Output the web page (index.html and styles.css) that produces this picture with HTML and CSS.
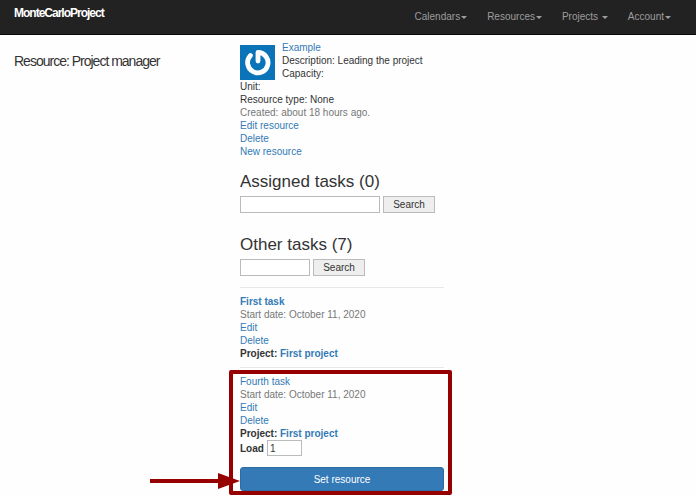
FILE: index.html
```html
<!DOCTYPE html>
<html lang="en">
<head>
<meta charset="utf-8">
<title>Resource | MonteCarloProject</title>
<link rel="stylesheet" href="styles.css">
</head>
<body>
<header class="navbar">
  <a class="logo" href="#">MonteCarloProject</a>
  <nav class="menu">
    <a href="#">Calendars<span class="caret"></span></a>
    <a href="#">Resources<span class="caret"></span></a>
    <a href="#">Projects <span class="caret"></span></a>
    <a href="#">Account<span class="caret"></span></a>
  </nav>
</header>
<main class="container">
  <aside>
    <h1>Resource: Project manager</h1>
  </aside>
  <div class="content">
    <section class="resource">
      <svg class="avatar" viewBox="0 0 35 35" aria-hidden="true">
        <rect width="35" height="35" fill="#0b73b8"/>
        <path d="M10.4 10.6A10.2 10.2 0 1 0 18 7.4V16" fill="none" stroke="#fff" stroke-width="4.8" stroke-linecap="round" stroke-linejoin="round"/>
      </svg>
      <div><a href="#">Example</a></div>
      <div>Description: Leading the project</div>
      <div>Capacity:</div>
      <div>Unit:</div>
      <div>Resource type: None</div>
      <div class="muted">Created: about 18 hours ago.</div>
      <div><a href="#">Edit resource</a></div>
      <div><a href="#">Delete</a></div>
      <div><a href="#">New resource</a></div>
    </section>
    <section class="tasks">
      <h2>Assigned tasks (0)</h2>
      <form class="search">
        <input class="wide" type="text" aria-label="Search assigned tasks">
        <button type="button">Search</button>
      </form>
    </section>
    <section class="tasks">
      <h2>Other tasks (7)</h2>
      <form class="search">
        <input class="short" type="text" aria-label="Search other tasks">
        <button type="button">Search</button>
      </form>
    </section>
    <ol class="list">
      <li>
        <div><a class="strong" href="#">First task</a></div>
        <div class="muted">Start date: October 11, 2020</div>
        <div><a href="#">Edit</a></div>
        <div><a href="#">Delete</a></div>
        <div class="strong">Project: <a href="#">First project</a></div>
      </li>
      <li>
        <div><a href="#">Fourth task</a></div>
        <div class="muted">Start date: October 11, 2020</div>
        <div><a href="#">Edit</a></div>
        <div><a href="#">Delete</a></div>
        <div class="strong">Project: <a href="#">First project</a></div>
        <form>
          <div class="load">
            <label class="strong" for="load">Load</label>
            <input id="load" type="text" value="1">
          </div>
          <button class="primary" type="button">Set resource</button>
        </form>
        <div class="highlight"></div>
        <svg class="arrow" viewBox="0 0 90 16" aria-hidden="true">
          <path d="M0 6H68V0L90 8L68 16V10H0Z" fill="#960000"/>
        </svg>
      </li>
    </ol>
  </div>
</main>
</body>
</html>
```
FILE: styles.css
```css
* {
  box-sizing: border-box;
}

body {
  margin: 0;
  background: #fefefe;
  color: #333;
  font: 10px/13px "Liberation Sans", Arial, sans-serif;
}

a {
  color: #337ab7;
  text-decoration: none;
}

.navbar {
  display: flex;
  justify-content: space-between;
  height: 35px;
  padding: 0 25px 0 14px;
  background: #222;
  border-bottom: 1px solid #080808;
}

.logo {
  padding-top: 7px;
  color: #fff;
  font-size: 12px;
  font-weight: bold;
  letter-spacing: -1px;
}

.menu {
  display: flex;
  gap: 20px;
  padding-top: 10px;
}

.menu a {
  color: #9d9d9d;
}

.caret {
  display: inline-block;
  margin-left: 1px;
  vertical-align: middle;
  border-top: 3px solid;
  border-left: 3px solid transparent;
  border-right: 3px solid transparent;
}

.container {
  display: grid;
  grid-template-columns: repeat(3, 1fr);
  gap: 22px;
  padding: 5px 26px 0 14px;
}

h1 {
  margin: 12px 0 0;
  font-size: 14px;
  font-weight: normal;
  line-height: 18px;
  letter-spacing: -1px;
  white-space: nowrap;
}

.avatar {
  float: left;
  width: 35px;
  height: 35px;
  margin: 4px 7px 0 0;
}

.muted {
  color: #777;
}

.strong {
  font-weight: bold;
}

.resource {
  padding-top: 1px;
  margin-bottom: 14px;
}

.tasks {
  margin-bottom: 22px;
}

h2 {
  margin: 0 0 5px;
  font-size: 17px;
  font-weight: normal;
  line-height: 19px;
}

.search {
  display: flex;
  gap: 3px;
}

.search input,
.load input {
  height: 17px;
  padding: 0 2px;
  border: 1px solid #bbb;
  background: #fff;
  color: #333;
  font: inherit;
}

.wide {
  width: 140px;
}

.short {
  width: 70px;
}

.search button {
  width: 52px;
  height: 17px;
  padding: 0;
  border: 1px solid #bbb;
  background: #eee;
  color: #333;
  font: inherit;
}

.list {
  margin: -11px 0 0;
  padding: 0;
  list-style: none;
}

.list li {
  position: relative;
  padding: 7px 0;
  border-top: 1px solid #e8e8e8;
}

.load {
  display: flex;
  align-items: center;
  gap: 3px;
}

.load input {
  width: 35px;
  height: 16px;
}

.primary {
  display: block;
  width: 100%;
  height: 24px;
  margin-top: 11px;
  padding: 0;
  border: 1px solid #2e6da4;
  border-radius: 3px;
  background: #337ab7;
  color: #fff;
  font: inherit;
}

.highlight {
  position: absolute;
  inset: 2px -8px 3px -11px;
  border: 4px solid #960000;
  border-radius: 2px;
  pointer-events: none;
}

.arrow {
  position: absolute;
  right: 100%;
  bottom: 9px;
  width: 90px;
  height: 16px;
}
```
